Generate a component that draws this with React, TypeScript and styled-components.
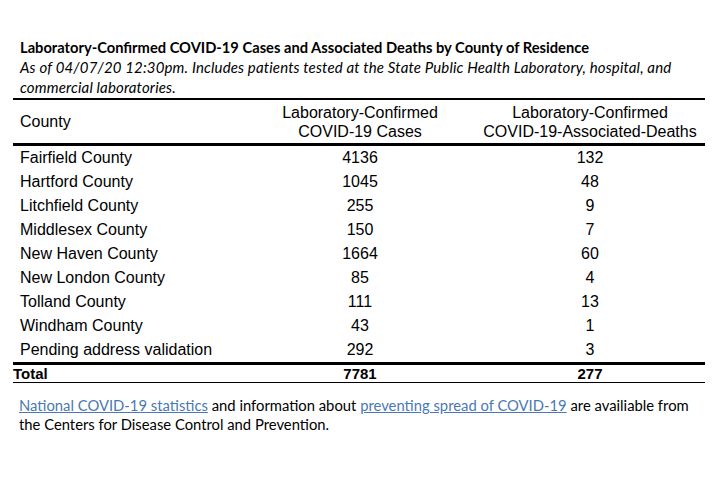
import React from "react";
import styled, { createGlobalStyle } from "styled-components";

const Global = createGlobalStyle`
  html, body { margin: 0; padding: 0; background: #fff; }
  body { width: 720px; height: 480px; overflow: hidden; }
`;

const Page = styled.div`
  padding: 37px 15px 0 13px;
  color: #000;
`;

const Caption = styled.div`
  padding-left: 7px;
  font-family: Lato, "Open Sans", sans-serif;
  font-size: 14.5px;
  line-height: 20px;
`;

const Title = styled.div`
  font-weight: 700;
  font-size: 14.7px;
`;

const Note = styled.div`
  font-style: italic;
  font-size: 15px;
  letter-spacing: 0.15px;
  padding-right: 10px;
`;

const Table = styled.table`
  width: 692px;
  margin-top: 1px;
  border-collapse: collapse;
  font-family: "Liberation Sans", Arial, sans-serif;
  font-size: 16px;
  table-layout: fixed;
`;

const HeadRow = styled.tr`
  border-top: 2px solid #000;
  border-bottom: 3px solid #000;
`;

const Th = styled.th<{ $left?: boolean }>`
  font-weight: 400;
  text-align: ${(p) => (p.$left ? "left" : "center")};
  padding: ${(p) => (p.$left ? "0 0 0 7px" : "0")};
  height: 43px;
  line-height: 19px;
  vertical-align: middle;
`;

const Row = styled.tr<{ $last?: boolean }>`
  border-bottom: ${(p) => (p.$last ? "3px solid #000" : "none")};
`;

const Td = styled.td<{ $left?: boolean }>`
  height: 24px;
  padding: ${(p) => (p.$left ? "0 0 0 7px" : "0")};
  text-align: ${(p) => (p.$left ? "left" : "center")};
  vertical-align: middle;
  line-height: 24px;
`;

const TotalRow = styled.tr`
  border-bottom: 1px solid #000;
`;

const TotalCell = styled.td<{ $left?: boolean }>`
  font-weight: 700;
  height: 17px;
  line-height: 17px;
  padding: 0;
  text-align: ${(p) => (p.$left ? "left" : "center")};
  font-size: 15px;
`;

const Footer = styled.p`
  margin: 13px 0 0;
  padding-left: 6px;
  width: 680px;
  font-family: Lato, "Open Sans", sans-serif;
  font-size: 14.8px;
  line-height: 19px;
`;

const Link = styled.a`
  color: #4a78b4;
  text-decoration: underline;
`;

const rows: [string, number, number][] = [
  ["Fairfield County", 4136, 132],
  ["Hartford County", 1045, 48],
  ["Litchfield County", 255, 9],
  ["Middlesex County", 150, 7],
  ["New Haven County", 1664, 60],
  ["New London County", 85, 4],
  ["Tolland County", 111, 13],
  ["Windham County", 43, 1],
  ["Pending address validation", 292, 3],
];

export default function App() {
  return (
    <Page>
      <Global />
      <Caption>
        <Title>Laboratory-Confirmed COVID-19 Cases and Associated Deaths by County of Residence</Title>
        <Note>
          As of 04/07/20 12:30pm. Includes patients tested at the State Public Health Laboratory, hospital, and
          commercial laboratories.
        </Note>
      </Caption>
      <Table>
        <colgroup>
          <col style={{ width: 232 }} />
          <col style={{ width: 230 }} />
          <col style={{ width: 230 }} />
        </colgroup>
        <thead>
          <HeadRow>
            <Th $left>County</Th>
            <Th>
              Laboratory-Confirmed
              <br />
              COVID-19 Cases
            </Th>
            <Th>
              Laboratory-Confirmed
              <br />
              COVID-19-Associated-Deaths
            </Th>
          </HeadRow>
        </thead>
        <tbody>
          {rows.map(([name, cases, deaths], i) => (
            <Row key={name} $last={i === rows.length - 1}>
              <Td $left>{name}</Td>
              <Td>{cases}</Td>
              <Td>{deaths}</Td>
            </Row>
          ))}
          <TotalRow>
            <TotalCell $left>Total</TotalCell>
            <TotalCell>7781</TotalCell>
            <TotalCell>277</TotalCell>
          </TotalRow>
        </tbody>
      </Table>
      <Footer>
        <Link href="#">National COVID-19 statistics</Link> and information about{" "}
        <Link href="#">preventing spread of COVID-19</Link> are availiable from the Centers for Disease
        Control and Prevention.
      </Footer>
    </Page>
  );
}
